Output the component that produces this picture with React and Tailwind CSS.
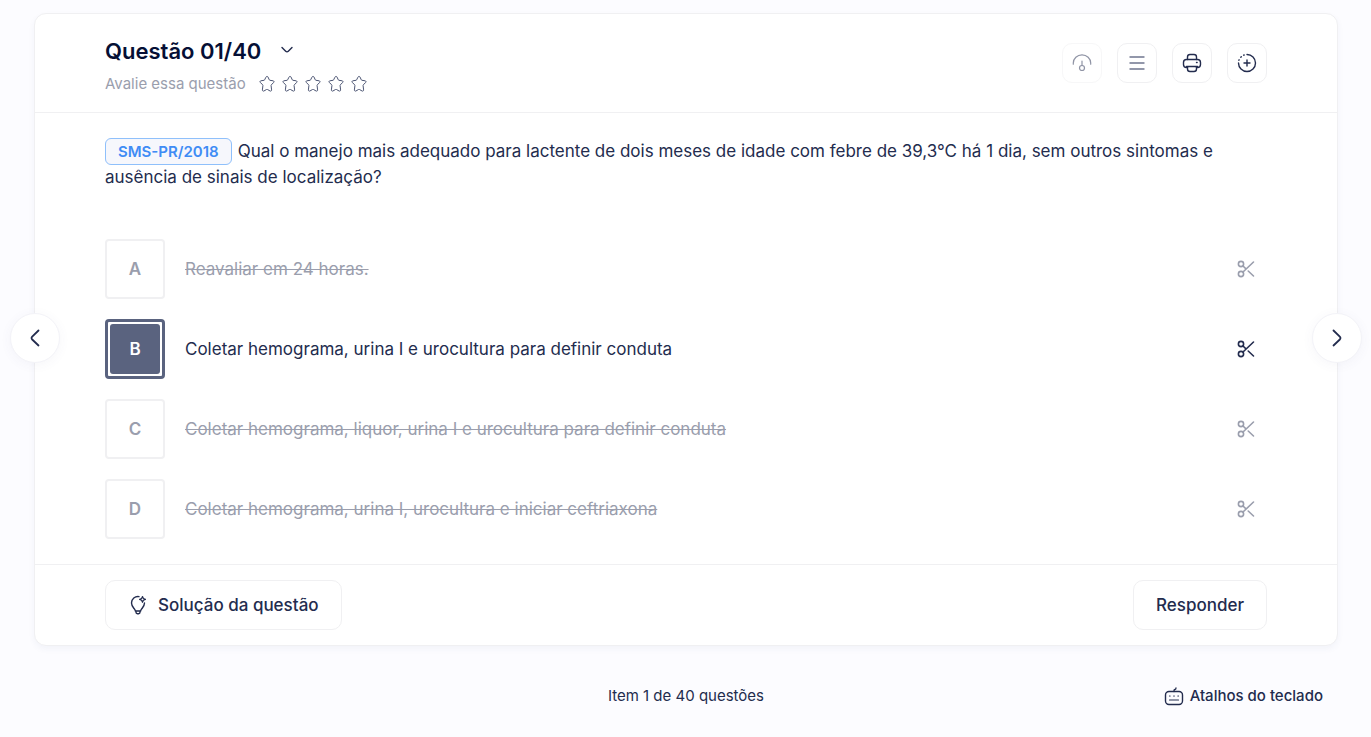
import { useState } from 'react';
import clsx from 'clsx';

const OPTIONS = [
    { id: 'A', text: 'Reavaliar em 24 horas.', cut: true },
    { id: 'B', text: 'Coletar hemograma, urina I e urocultura para definir conduta', cut: false },
    { id: 'C', text: 'Coletar hemograma, liquor, urina I e urocultura para definir conduta', cut: true },
    { id: 'D', text: 'Coletar hemograma, urina I, urocultura e iniciar ceftriaxona', cut: true },
];

function Icon({ size = 20, viewBox = '0 0 20 20', className, children }) {
    return (
        <svg
            width={size}
            height={size}
            viewBox={viewBox}
            fill="none"
            stroke="currentColor"
            strokeWidth="1.4"
            strokeLinecap="round"
            strokeLinejoin="round"
            className={clsx('shrink-0', className)}
            aria-hidden="true"
        >
            {children}
        </svg>
    );
}

function StarIcon() {
    return (
        <Icon size={18} viewBox="0 0 18 18">
            <path
                strokeWidth="1"
                d="M8.1 1.9c.4-.8 1.4-.8 1.8 0l1.4 2.9c.1.3.4.5.7.5l3.1.5c.9.1 1.2 1 .6 1.6l-2.4 2.5c-.2.2-.3.5-.2.8l.5 4.2c.1.9-.7 1.5-1.5 1.1l-2.6-1.5c-.3-.2-.7-.2-1 0l-2.6 1.5c-.8.4-1.6-.2-1.5-1.1l.5-4.2c0-.3 0-.6-.2-.8L2.3 7.4c-.6-.6-.3-1.5.6-1.6l3.1-.5c.3 0 .6-.2.7-.5z"
            />
        </Icon>
    );
}

function GaugeIcon() {
    return (
        <Icon>
            <path strokeWidth="1.2" d="M1.3 11.2V10a8.7 8.2 0 0 1 17.4 0v1.2M10 8v4.5" />
            <circle strokeWidth="1.2" cx="10" cy="15" r="2.5" />
        </Icon>
    );
}

function ListIcon() {
    return (
        <Icon>
            <path d="M3 4h14M3 10h14M3 16h14" />
        </Icon>
    );
}

function PrinterIcon() {
    return (
        <Icon>
            <path d="M5.5 6.5V4c0-1.7.8-2.5 2.5-2.5h4c1.7 0 2.5.8 2.5 2.5v2.5" />
            <path d="M5.5 14.5h-1c-2 0-3-1-3-3v-2c0-2 1-3 3-3h11c2 0 3 1 3 3v2c0 2-1 3-3 3h-1" />
            <path d="M4.5 13.5h11M5.5 13.5V16c0 1.7.8 2.5 2.5 2.5h4c1.7 0 2.5-.8 2.5-2.5v-2.5" />
            <path d="M14.5 9.5h.6" />
        </Icon>
    );
}

function AddIcon() {
    return (
        <Icon>
            <path d="M10 1.5a8.5 8.5 0 1 1-8.5 8.5M1.9 7.3l.2-.5M3.8 4.2l.5-.5M6.7 2.2l.5-.2M7 10h6M10 7v6" />
        </Icon>
    );
}

function ScissorsIcon() {
    return (
        <Icon size={18} viewBox="0 0 18 18">
            <g strokeWidth="1.6">
                <circle cx="4" cy="4" r="2.6" />
                <circle cx="4" cy="14" r="2.6" />
                <path d="M16.5 2 6 12M6 6l3 2.8M11.2 11l5.3 5" />
            </g>
        </Icon>
    );
}

function BulbIcon() {
    return (
        <Icon>
            <path d="M11 1.6A6.5 6.5 0 0 0 3.5 8c0 2.8 1.7 4.4 3 6.2.4.6.7 1.1.9 1.800h5.200c.2-.7.5-1.200.9-1.800 1.300-1.800 3-3.400 3-6.200" />
            <path d="M8 16.500v.8c0 .9.500 1.400 1.400 1.400h1.200c.9 0 1.400-.5 1.400-1.400v-.8" />
            <path strokeWidth="1.200" d="M14.500 1.500l.9 2 2 .9-2 .9-.9 2-.9-2-2-.9 2-.9z" />
        </Icon>
    );
}

function KeyboardIcon() {
    return (
        <Icon>
            <rect x="1.5" y="5.5" width="17" height="13" rx="3.5" strokeWidth="1.4" />
            <path strokeWidth="1.3" d="M10 5.5v-.7c0-.8.4-1.2 1-1.3.8-.1 1-.5 1-1.5" />
            <path strokeWidth="1.2" d="M5.5 10h.6M9.7 10h.6M13.9 10h.6M5.5 14h9" />
        </Icon>
    );
}

function ToolButton({ label, className, children }) {
    return (
        <button
            type="button"
            aria-label={label}
            className={clsx('flex size-10 items-center justify-center rounded-[10px] border border-[#f0f0f2]', className)}
        >
            {children}
        </button>
    );
}

function NavButton({ label, side, children }) {
    return (
        <button
            type="button"
            aria-label={label}
            className={clsx(
                'absolute top-[299px] flex size-[50px] items-center justify-center rounded-full border border-[#f3f3f8] bg-white shadow-[0_2px_12px_rgba(80,80,140,0.05)]',
                side === 'left' ? '-left-[25px]' : '-right-[25px]'
            )}
        >
            {children}
        </button>
    );
}

function Option({ option, selected, onSelect, onCut }) {
    return (
        <div className={clsx('flex items-center justify-between', option.cut && 'text-[#9a9ead]')}>
            <label className="flex cursor-pointer items-center gap-5 text-[17px] leading-[26px]">
                <input
                    type="radio"
                    name="alternativa"
                    className="sr-only"
                    checked={selected}
                    onChange={() => onSelect(option.id)}
                />
                <span
                    className={clsx(
                        'flex size-[60px] shrink-0 rounded-[4px]',
                        selected ? 'border-3 border-[#5a637f] p-[2px] text-white' : 'border-2 border-[#f0f0f2]'
                    )}
                >
                    <span
                        className={clsx(
                            'flex flex-1 items-center justify-center rounded-[3px] font-semibold',
                            selected && 'bg-[#5a637f]'
                        )}
                    >
                        {option.id}
                    </span>
                </span>
                <span className={clsx(option.cut && 'line-through')}>{option.text}</span>
            </label>
            <button type="button" aria-label={`Riscar alternativa ${option.id}`} className="p-3" onClick={() => onCut(option.id)}>
                <ScissorsIcon />
            </button>
        </div>
    );
}

export default function App() {
    const [options, setOptions] = useState(OPTIONS);
    const [selected, setSelected] = useState('B');

    const toggleCut = (id) => {
        setOptions(options.map(o => (o.id === id ? { ...o, cut: !o.cut } : o)));
    };

    return (
        <div className="min-h-screen bg-[#fcfcff] pt-[13px] pr-[33px] pl-[34px] font-['Inter',sans-serif] text-[#232c4e]">
            <main className="relative rounded-xl border border-[#f0f0f2] bg-white shadow-[0_3px_6px_rgba(60,70,130,0.05)]">
                <header className="flex items-center justify-between border-b border-[#f0f0f2] px-[70px] py-4">
                    <div>
                        <div className="flex items-center gap-4">
                            <h1 className="text-[22px] leading-[42px] font-semibold text-[#050f35]">Questão 01/40</h1>
                            <button type="button" aria-label="Escolher questão">
                                <Icon>
                                    <path d="M5 6.5l3.7 3.8c.8.8 1.8.8 2.6 0L15 6.5" />
                                </Icon>
                            </button>
                        </div>
                        <div className="flex items-center gap-3">
                            <span className="text-[15px] leading-6 text-[#9a9ead]">Avalie essa questão</span>
                            <div className="flex gap-[5px] text-[#4c5573]">
                                {[1, 2, 3, 4, 5].map((n) => (
                                    <button key={n} type="button" aria-label={`Nota ${n}`}>
                                        <StarIcon />
                                    </button>
                                ))}
                            </div>
                        </div>
                    </div>
                    <div className="flex gap-[15px]">
                        <ToolButton label="Dificuldade" className="opacity-50"><GaugeIcon /></ToolButton>
                        <ToolButton label="Lista" className="text-[#6f768f]"><ListIcon /></ToolButton>
                        <ToolButton label="Imprimir"><PrinterIcon /></ToolButton>
                        <ToolButton label="Adicionar"><AddIcon /></ToolButton>
                    </div>
                </header>

                <section className="px-[70px] py-[25px]">
                    <p className="text-[17px] leading-[26px]">
                        <span className="mr-[6px] rounded-md border border-[#8fc0fb] bg-[#f6f7fc] px-3 py-[3px] text-[15px] leading-none font-semibold text-[#3f8cf5]">
                            SMS-PR/2018
                        </span>
                        Qual o manejo mais adequado para lactente de dois meses de idade com febre de 39,3°C há 1 dia, sem outros sintomas e ausência de sinais de localização?
                    </p>
                    <div role="radiogroup" aria-label="Alternativas" className="mt-[49px] flex flex-col gap-5">
                        {options.map((o) => (
                            <Option key={o.id} option={o} selected={selected === o.id} onSelect={setSelected} onCut={toggleCut} />
                        ))}
                    </div>
                </section>

                <footer className="flex items-center justify-between border-t border-[#f0f0f2] px-[70px] py-[15px] text-[17px] leading-[26px] font-medium">
                    <button type="button" className="flex h-[50px] items-center gap-[10px] rounded-[10px] border border-[#f0f0f2] px-[22px]">
                        <BulbIcon />
                        Solução da questão
                    </button>
                    <button type="button" className="h-[50px] rounded-[10px] border border-[#f0f0f2] px-[22px]">
                        Responder
                    </button>
                </footer>

                <NavButton label="Questão anterior" side="left">
                    <Icon>
                        <path strokeWidth="1.8" d="M13.500 2.500 7.200 8.600c-.9.900-.9 2 0 2.900l6.300 6" />
                    </Icon>
                </NavButton>
                <NavButton label="Próxima questão" side="right">
                    <Icon>
                        <path strokeWidth="1.8" d="M6.500 2.500l6.300 6.100c.9.900.9 2 0 2.900l-6.300 6" />
                    </Icon>
                </NavButton>
            </main>

            <div className="grid grid-cols-3 items-center px-[15px] pt-[37px] text-[15px] leading-[26px]">
                <span className="col-start-2 text-center">Item 1 de 40 questões</span>
                <button type="button" className="flex items-center gap-[6px] justify-self-end font-medium">
                    <KeyboardIcon />
                    Atalhos do teclado
                </button>
            </div>
        </div>
    );
}
